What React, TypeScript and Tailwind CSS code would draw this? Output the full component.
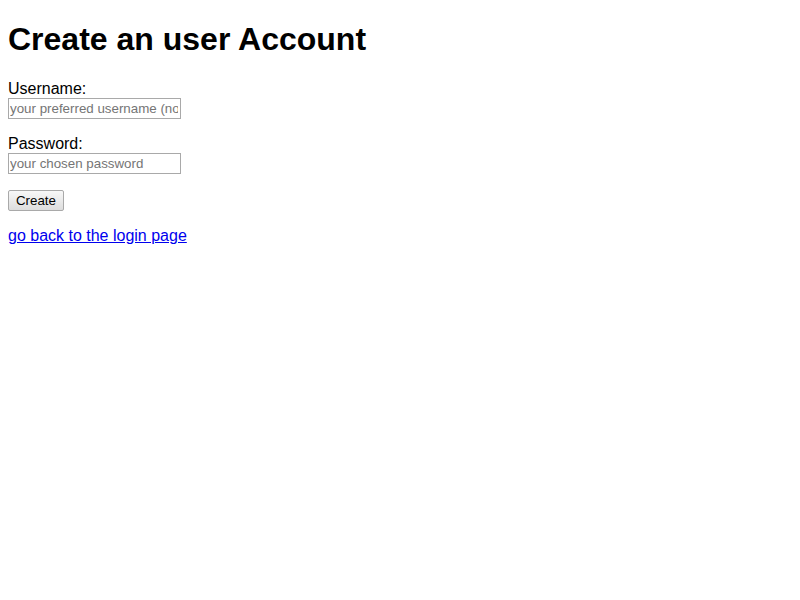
import React from "react";

export default function App() {
  return (
    <div className="min-h-[600px] bg-white px-2 text-black" style={{ fontFamily: '"Liberation Sans", Arial, sans-serif' }}>
      <h1 className="pt-[21px] pb-[22px] text-[32px] font-bold leading-[37px]">Create an user Account</h1>
      <div className="text-[16px] leading-[18px]">
        <div>Username:</div>
        <input
          type="text"
          placeholder="your preferred username (no spaces)"
          className="block h-[21px] w-[173px] border border-[#a9a9a9] bg-white pl-[1px] pr-[2px] text-[13.33px] leading-[15px] outline-none placeholder:text-[#757575]"
        />
        <div className="mt-[16px]">Password:</div>
        <input
          type="password"
          placeholder="your chosen password"
          className="block h-[21px] w-[173px] border border-[#a9a9a9] bg-white pl-[1px] pr-[2px] text-[13.33px] leading-[15px] outline-none placeholder:text-[#757575]"
        />
        <button className="mt-[16px] block h-[21px] w-[56px] rounded-[2px] border border-[#a9a9a9] bg-gradient-to-b from-[#f8f8f8] to-[#dddddd] text-[13.33px] leading-[15px] text-black">
          Create
        </button>
        <a href="#" className="mt-[16px] block w-fit text-[16px] leading-[18px] text-[#0000ee] underline">
          go back to the login page
        </a>
      </div>
    </div>
  );
}
